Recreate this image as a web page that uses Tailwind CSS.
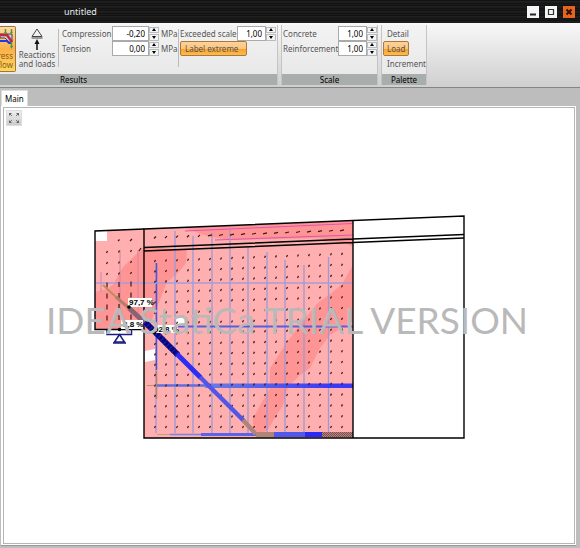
<!DOCTYPE html>
<html lang="en">
<head>
  <meta charset="UTF-8" />
  <title>untitled</title>
  <script src="https://cdn.jsdelivr.net/npm/@tailwindcss/browser@4"></script>
</head>
<body class="h-screen flex flex-col overflow-hidden bg-[#bdbdbd] font-['Noto_Sans',sans-serif] text-[8px] leading-3 text-[#555]">

  <!-- title bar -->
  <header class="h-[23px] shrink-0 flex items-center justify-between pl-16 pr-[5px] bg-[#151515] bg-[repeating-linear-gradient(180deg,#0c0c0c_0px,#262626_2px,#111_3px,#1c1c1c_5px)]">
    <h1 class="text-[9px] text-gray-200">untitled</h1>
    <div class="flex gap-[6px]">
      <button aria-label="Minimize" class="w-3 h-3 bg-gray-100"><svg viewBox="0 0 12 12" class="size-3"><path d="M3 8.5h6" stroke="#222" stroke-width="2" /></svg></button>
      <button aria-label="Maximize" class="w-3 h-3 bg-gray-100"><svg viewBox="0 0 12 12" class="size-3"><path d="M3.5 3.5h5v5h-5z" fill="none" stroke="#333" stroke-width="1.2" /></svg></button>
      <button aria-label="Close" class="w-3 h-3 bg-[#e8641b]"><svg viewBox="0 0 12 12" class="size-3"><path d="M3.5 3.5l5 5m0-5l-5 5" stroke="#2a1005" stroke-width="2" /></svg></button>
    </div>
  </header>

  <!-- ribbon -->
  <div class="h-[65px] shrink-0 flex gap-[3px] pt-[2px] pb-[2px] border-b border-[#858585] bg-linear-to-b from-[#f8f8f8] to-[#cfcfcf]">

    <section class="w-[278px] flex flex-col border-r border-[#c4c4c4] bg-linear-to-b from-[#f3f3f3] to-[#e6e6e6]">
      <div class="h-[49px] flex pt-[1px]">
        <button class="relative w-4 h-[46px] shrink-0 overflow-hidden rounded-r-xs border border-l-0 border-[#9c7540] bg-linear-to-b from-[#fdd9a4] via-[#fbb04a] to-[#ffd85a] text-[#8a5a1c]">
          <svg viewBox="0 0 15 24" class="absolute left-0 top-0 w-[15px] h-6">
            <path d="M0 7h12v8h-3l-4-4H0z" fill="#c9cde0" stroke="#444" />
            <path d="M0 8h7l5 7" fill="none" stroke="#c2283a" stroke-width="2.500" />
            <path d="M0 14h7l2 2h3" fill="none" stroke="#2a37d8" stroke-width="2" />
            <path d="M5.500 2v4m6-4v4m0 9v5" stroke="#4c9a3a" stroke-width="1.500" />
            <path d="M4 5h3l-1.500 2zM10 5h3l-1.500 2zM10 19h3l-1.500 3z" fill="#4c9a3a" />
          </svg>
          <span class="absolute right-[2px] top-6 leading-[9px] text-right">Stress<br />flow</span>
        </button>
        <button class="w-[42px] flex flex-col items-center pt-[2px] leading-[9px]">
          <svg viewBox="0 0 14 22" class="w-[14px] h-[22px]">
            <path d="M7 1l5 7.500H2zM1.500 10h11" fill="none" stroke="#444" />
            <path d="M7 22V14" stroke="#111" stroke-width="1.500" />
            <path d="M4.500 16L7 11l2.500 5z" fill="#111" />
          </svg>
          <span class="whitespace-nowrap">Reactions<br />and loads</span>
        </button>
        <div class="mt-[3px] h-[38px] w-px bg-[#bbb]"></div>

        <div class="ml-[3px] grid grid-cols-[50px_37px_10px_17px] auto-rows-[15px] content-start items-center">
          <label for="compression">Compression</label>
          <input id="compression" value="-0,20" class="w-full h-[15px] bg-white border border-[#aaa] pr-[3px] text-right text-black" />
          <div class="h-[14px] flex flex-col gap-px">
            <button aria-label="Increase compression" class="h-[7px] w-full border border-[#bbb] bg-gray-100 grid place-items-center"><svg viewBox="0 0 4 3" class="w-1 h-[3px]"><path d="M0 3l2-3 2 3z" /></svg></button>
            <button aria-label="Decrease compression" class="h-[7px] w-full border border-[#bbb] bg-gray-100 grid place-items-center"><svg viewBox="0 0 4 3" class="w-1 h-[3px]"><path d="M0 0l2 3 2-3z" /></svg></button>
          </div>
          <span class="pl-[2px]">MPa</span>
          <label for="tension">Tension</label>
          <input id="tension" value="0,00" class="w-full h-[15px] bg-white border border-[#aaa] pr-[3px] text-right text-black" />
          <div class="h-[14px] flex flex-col gap-px">
            <button aria-label="Increase tension" class="h-[7px] w-full border border-[#bbb] bg-gray-100 grid place-items-center"><svg viewBox="0 0 4 3" class="w-1 h-[3px]"><path d="M0 3l2-3 2 3z" /></svg></button>
            <button aria-label="Decrease tension" class="h-[7px] w-full border border-[#bbb] bg-gray-100 grid place-items-center"><svg viewBox="0 0 4 3" class="w-1 h-[3px]"><path d="M0 0l2 3 2-3z" /></svg></button>
          </div>
          <span class="pl-[2px]">MPa</span>
        </div>
        <div class="ml-[2px] mt-[3px] h-[38px] w-px bg-[#bbb]"></div>

        <div class="ml-px grid grid-cols-[57px_29px_10px] auto-rows-[15px] content-start items-center">
          <label for="exceeded" class="whitespace-nowrap">Exceeded scale</label>
          <input id="exceeded" value="1,00" class="w-full h-[15px] bg-white border border-[#aaa] pr-[3px] text-right text-black" />
          <div class="h-[14px] flex flex-col gap-px">
            <button aria-label="Increase exceeded scale" class="h-[7px] w-full border border-[#bbb] bg-gray-100 grid place-items-center"><svg viewBox="0 0 4 3" class="w-1 h-[3px]"><path d="M0 3l2-3 2 3z" /></svg></button>
            <button aria-label="Decrease exceeded scale" class="h-[7px] w-full border border-[#bbb] bg-gray-100 grid place-items-center"><svg viewBox="0 0 4 3" class="w-1 h-[3px]"><path d="M0 0l2 3 2-3z" /></svg></button>
          </div>
          <button class="col-span-3 w-[67px] h-[15px] pl-1 text-left leading-3 whitespace-nowrap rounded-xs border border-[#a87a3a] bg-[linear-gradient(#fdd29a,#fcc57c_50%,#f9a02c_52%,#fdbb4e)]">Label extreme</button>
        </div>
      </div>
      <h2 class="h-[11px] flex items-center justify-center pr-[130px] bg-[#a9adab] text-black">Results</h2>
    </section>

    <section class="w-[97px] flex flex-col border-x border-[#c4c4c4] bg-linear-to-b from-[#f3f3f3] to-[#e6e6e6]">
      <div class="h-[49px] pt-[1px] pl-px">
        <div class="grid grid-cols-[55px_29px_10px] auto-rows-[15px] items-center">
          <label for="concrete">Concrete</label>
          <input id="concrete" value="1,00" class="w-full h-[15px] bg-white border border-[#aaa] pr-[3px] text-right text-black" />
          <div class="h-[14px] flex flex-col gap-px">
            <button aria-label="Increase concrete" class="h-[7px] w-full border border-[#bbb] bg-gray-100 grid place-items-center"><svg viewBox="0 0 4 3" class="w-1 h-[3px]"><path d="M0 3l2-3 2 3z" /></svg></button>
            <button aria-label="Decrease concrete" class="h-[7px] w-full border border-[#bbb] bg-gray-100 grid place-items-center"><svg viewBox="0 0 4 3" class="w-1 h-[3px]"><path d="M0 0l2 3 2-3z" /></svg></button>
          </div>
          <label for="reinforcement">Reinforcement</label>
          <input id="reinforcement" value="1,00" class="w-full h-[15px] bg-white border border-[#aaa] pr-[3px] text-right text-black" />
          <div class="h-[14px] flex flex-col gap-px">
            <button aria-label="Increase reinforcement" class="h-[7px] w-full border border-[#bbb] bg-gray-100 grid place-items-center"><svg viewBox="0 0 4 3" class="w-1 h-[3px]"><path d="M0 3l2-3 2 3z" /></svg></button>
            <button aria-label="Decrease reinforcement" class="h-[7px] w-full border border-[#bbb] bg-gray-100 grid place-items-center"><svg viewBox="0 0 4 3" class="w-1 h-[3px]"><path d="M0 0l2 3 2-3z" /></svg></button>
          </div>
        </div>
      </div>
      <h2 class="h-[11px] flex items-center justify-center bg-[#a9adab] text-black">Scale</h2>
    </section>

    <section class="w-[46px] flex flex-col border-x border-[#c4c4c4] bg-linear-to-b from-[#f3f3f3] to-[#e6e6e6]">
      <div class="h-[49px] flex flex-col items-start pt-[1px] pl-px">
        <button class="h-[15px] px-1">Detail</button>
        <button class="h-[15px] px-[3px] leading-3 rounded-xs border border-[#a87a3a] bg-[linear-gradient(#fdd29a,#fcc57c_50%,#f9a02c_52%,#fdbb4e)]">Load</button>
        <button class="h-[15px] px-1">Increment</button>
      </div>
      <h2 class="h-[11px] flex items-center justify-center bg-[#a9adab] text-black">Palette</h2>
    </section>
  </div>

  <!-- view tabs -->
  <nav class="h-[18px] shrink-0 flex items-end pl-px">
    <button class="h-4 px-[3px] bg-white border-t border-x border-[#ddd] text-black">Main</button>
  </nav>

  <main class="flex-1 min-h-0 ml-px mr-1 mb-[2px] p-[1px] pl-[2px] bg-white border-b border-[#999]">
    <div class="relative h-full border border-[#b5b5b5] bg-white">
      <svg id="model" viewBox="4 108 570 435" class="w-full h-full">
        <defs>
          <pattern id="hatch" width="2" height="2" patternUnits="userSpaceOnUse">
            <rect width="2" height="2" fill="#bf8372" /><path d="M0 0h1v1H0zM1 1h1v1H1z" fill="#75505f" />
          </pattern>
          <linearGradient id="bar" gradientUnits="userSpaceOnUse" x1="165" x2="330" y1="0" y2="0">
            <stop offset="0" stop-color="#7f92dc" /><stop offset="1" stop-color="#3a3af5" />
          </linearGradient>
        </defs>

        <!-- concrete -->
        <path d="M95 231L353 221V438H144V330H95z" fill="#ffafaf" />
        <g fill="#ff9494">
          <path d="M95 292L107 289L114 284L119 273L124 266L144 247L187 250L186 263L178 273L167 282L160 300L154 314L149 330H95z" />
          <path d="M184 228L353 221V247L345 243L320 238L230 240L207 236z" />
          <path d="M353 265L342 284L333 292L319 302L305 318L287 342L270 368V388L253 418Q252 429 260 433Q267 433 270 426L283 405L288 387L299 376L310 368L320 348L330 335L353 321z" />
        </g>
        <path d="M95 231h12v10H95zM145 351l10-2v11l-10 2zM176 317l10-1v10h-10z" fill="#fff" />
        <path d="M185 231L353 223.500M215 240L353 235" stroke="#dd55b0" fill="none" />

        <!-- stirrups and horizontal bars -->
        <g id="stirrups" fill="none" stroke="#9a9ad8" stroke-width="1.300"></g>
        <path d="M120 250v65M138 250v65M101 272v20" stroke="#d084a0" />
        <path d="M156.500 263V370" stroke="#4656dc" stroke-width="1.500" />
        <path d="M156.500 371v28" stroke="#b08070" stroke-width="1.500" />
        <path d="M95 283h258" stroke="#a79bd8" stroke-width="1.500" />
        <path d="M160 326.500h193" stroke="#5560de" stroke-width="2" />
        <path d="M147 385.500h12" stroke="#b89070" />
        <path d="M157 385.500h53" stroke="#5f6ee0" stroke-width="2.500" />
        <path d="M205 383.500h148v4.500H205z" fill="url(#bar)" />
        <path d="M157 434.500h14" stroke="#c0a080" />
        <path d="M170 434.500h50" stroke="#7484e0" stroke-width="1.500" />
        <path d="M201 434.500h55" stroke="#5b63e6" stroke-width="3" />
        <path d="M256 432h18v5h-18z" fill="#b08478" />
        <path d="M274 432h32v5h-32z" fill="#5158ee" />
        <path d="M305 432h17v5h-17z" fill="#2a2af6" />
        <path d="M322 432h31v5h-31z" fill="url(#hatch)" />

        <g id="ticks" stroke="#3a1818" stroke-width="1.200"></g>

        <!-- outline -->
        <g fill="none" stroke="#000" stroke-width="1.400">
          <path d="M144 438V229L464 216V438z" />
          <path d="M144 229L95 231V329.500H144" />
          <path d="M353 220.500V438M144 247.500L464 234.500M144 251L464 238" />
        </g>

        <!-- diagonal bar -->
        <path d="M103 285L118 299" stroke="#bd9058" stroke-width="2" />
        <path d="M116 297L130 309" stroke="#b08068" stroke-width="3" />
        <path d="M129 308L148 326" stroke="#8a6274" stroke-width="5" />
        <path d="M145 322L178 355" stroke="#08087c" stroke-width="6" />
        <path d="M145 322L178 355" stroke="#2020b0" stroke-width="6" stroke-dasharray="1 3" />
        <path d="M177 354L201 378" stroke="#2d2df4" stroke-width="5" />
        <path d="M200 377L244 421" stroke="#5156e8" stroke-width="4.500" />
        <path d="M243 420L256 434" stroke="#b08478" stroke-width="4.500" />

        <!-- support -->
        <path d="M107 330v4.500h24.500V329M119.500 334.500l-5 7.500h10z" fill="none" stroke="#1a1a80" stroke-width="1.500" />
        <path d="M113 343h13" stroke="#1a1a80" stroke-width="1.500" />

        <g class="font-['Liberation_Sans',sans-serif] text-[8px] font-bold">
          <path d="M121 320h22v9h-22zM128 298h24v9h-24zM155 325h23v8h-23z" fill="#fff" />
          <text x="123" y="327">3,8 %</text>
          <text x="129" y="305">97,7 %</text>
          <text x="154" y="332">92,8 %</text>
        </g>
        <circle cx="129" cy="307" r="1.800" />
        <circle cx="119.500" cy="329.500" r="1.800" />
        <circle cx="154.500" cy="332.500" r="1.800" />

        <text x="46" y="334" fill="#b9b9b9" class="font-[Lato,sans-serif] text-[37px]">IDEA StatiCa TRIAL VERSION</text>
      </svg>
      <button aria-label="Zoom to fit" class="absolute left-[2px] top-[2px] size-4 bg-linear-to-b from-[#eee] to-[#ccc] border border-[#ddd]">
        <svg viewBox="0 0 14 14" class="size-[14px]">
          <path d="M5 5L3 3m6 2l2-2M5 9l-2 2m6-2l2 2" stroke="#777" />
          <path d="M2 2h3L2 5zM12 2v3L9 2zM2 12V9l3 3zM12 12H9l3-3z" fill="#666" />
        </svg>
      </button>
    </div>
  </main>

  <script>
    const ns = 'http://www.w3.org/2000/svg';

    function addPath(parent, d) {
      const path = document.createElementNS(ns, 'path');
      path.setAttribute('d', d);
      parent.appendChild(path);
    }

    const stirrups = document.getElementById('stirrups');
    [[156, 263], [175, 231], [193, 236], [212, 233], [230, 230], [248, 247], [267, 252], [285, 260], [304, 265], [328.5, 257]].forEach(([x, y]) => {
      addPath(stirrups, `M${x} ${y}V433`);
    });

    // principal stress directions, flat in the top flange and steep in the wall
    const ticks = document.getElementById('ticks');
    for (let col = 0; col < 18; col++) {
      const x = 155 + col * 11;
      const flange = 237.5 - col * 0.42;
      addPath(ticks, col < 5 ? `M${x - 1} ${flange + 1}l2 -2` : `M${x - 2} ${flange + 0.5}l4 -1`);
      const top = 261 - col * 0.42;
      for (let row = 0; row < 17; row++) {
        const y = top + row * (427 - top) / 16;
        addPath(ticks, `M${x - 0.5} ${y + 1}l1 -2`);
      }
    }
    [107, 119, 131].forEach((x, i) => {
      for (let row = 0; row < 7; row++) {
        const y = 252 - i * 0.5 + row * 11;
        addPath(ticks, row > 2 ? `M${x} ${y + 2.5}v-5` : `M${x - 0.5} ${y + 1}l1 -2`);
      }
    });
    addPath(ticks, 'M118 241l1.500 -1.500M130 241l2 -2M139 251l2 -3');
  </script>

</body>
</html>
